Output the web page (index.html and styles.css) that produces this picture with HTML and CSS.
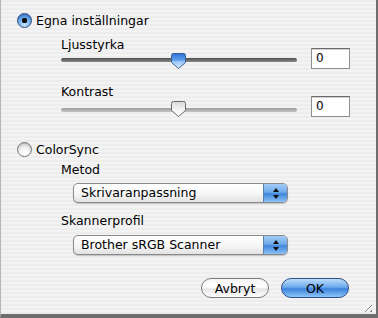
FILE: index.html
```html
<!DOCTYPE html>
<html lang="sv">
<head>
  <meta charset="UTF-8" />
  <title>Bildinställningar</title>
  <link rel="stylesheet" href="styles.css">
</head>
<body>

<div class="dialog">

  <!-- egna inställningar -->
  <label class="radio-row first">
    <span class="radio checked"></span>
    <span>Egna inställningar</span>
  </label>

  <div class="group">
    <div class="label brightness">Ljusstyrka</div>
    <div class="slider-row">
      <div class="slider dark">
        <div class="track"></div>
        <svg class="thumb" width="17" height="18" viewBox="0 0 17 18">
          <defs>
            <linearGradient id="blue" x1="0" y1="0" x2="0" y2="1">
              <stop offset="0" stop-color="#2f6fd6"/>
              <stop offset="0.45" stop-color="#5fa0ec"/>
              <stop offset="0.55" stop-color="#9cc8f5"/>
              <stop offset="1" stop-color="#d9ecfd"/>
            </linearGradient>
          </defs>
          <path d="M1.5 3.5 Q1.5 1.5 3.5 1.5 L13.5 1.5 Q15.5 1.5 15.5 3.5 L15.5 10.5 L8.5 16.5 L1.5 10.5 Z" fill="url(#blue)" stroke="#3a5f95" stroke-width="1"/>
        </svg>
      </div>
      <div class="field">0</div>
    </div>

    <div class="label contrast">Kontrast</div>
    <div class="slider-row second">
      <div class="slider light">
        <div class="track"></div>
        <svg class="thumb" width="17" height="18" viewBox="0 0 17 18">
          <defs>
            <linearGradient id="white" x1="0" y1="0" x2="0" y2="1">
              <stop offset="0" stop-color="#d8d8d8"/>
              <stop offset="0.5" stop-color="#f2f2f2"/>
              <stop offset="1" stop-color="#ffffff"/>
            </linearGradient>
          </defs>
          <path d="M1.5 3.5 Q1.5 1.5 3.5 1.5 L13.5 1.5 Q15.5 1.5 15.5 3.5 L15.5 10.5 L8.5 16.5 L1.5 10.5 Z" fill="url(#white)" stroke="#6a6a6a" stroke-width="1"/>
        </svg>
      </div>
      <div class="field">0</div>
    </div>
  </div>

  <!-- colorsync -->
  <label class="radio-row colorsync">
    <span class="radio"></span>
    <span>ColorSync</span>
  </label>

  <div class="group">
    <div class="label method">Metod</div>
    <div class="popup">
      <span class="popup-text">Skrivaranpassning</span>
      <span class="popup-arrows"><i class="up"></i><i class="down"></i></span>
    </div>

    <div class="label profile">Skannerprofil</div>
    <div class="popup last">
      <span class="popup-text">Brother sRGB Scanner</span>
      <span class="popup-arrows"><i class="up"></i><i class="down"></i></span>
    </div>
  </div>

  <div class="buttons">
    <button class="btn">Avbryt</button>
    <button class="btn default">OK</button>
  </div>

  <div class="grip"></div>
</div>

</body>
</html>
```

FILE: styles.css
```css
/* dialogruta */
body {
  margin: 0;
  padding: 0;
  font-family: "DejaVu Sans", sans-serif;
  font-size: 12.5px;
  color: #000;
}

.dialog {
  position: relative;
  display: flex;
  flex-direction: column;
  width: 375px;
  height: 314px;
  border-left: 1px solid #b4b4b4;
  border-right: 2px solid #6e6e6e;
  border-bottom: 4px solid #6e6e6e;
  background: repeating-linear-gradient(#ededed 0, #ededed 2px, #f3f3f3 2px, #f3f3f3 4px);
}

.radio-row {
  display: flex;
  align-items: center;
  gap: 4px;
  height: 16px;
  padding-left: 16px;
}

.radio-row.first {
  margin-top: 12px;
}

.radio-row.colorsync {
  margin-top: 23px;
}

.radio {
  width: 13px;
  height: 13px;
  border-radius: 50%;
  border: 1px solid #777;
  background: radial-gradient(circle at 50% 80%, #ffffff 0, #f4f4f4 40%, #c8c8c8 100%);
  box-shadow: inset 0 1px 1px rgba(0,0,0,0.15);
}

.radio.checked {
  border-color: #2b4f86;
  background:
    radial-gradient(circle, #111 0, #111 2.5px, transparent 3px),
    radial-gradient(circle at 50% 85%, #c6e2fb 0, #79b3ee 45%, #2d6cd2 100%);
}

.group {
  display: flex;
  flex-direction: column;
  padding-left: 60px;
}

.label {
  height: 12px;
  line-height: 12px;
}

.label.brightness { margin-top: 11px; }
.label.contrast { margin-top: 16px; }
.label.method { margin-top: 7px; }
.label.profile { margin-top: 12px; }

.slider-row {
  display: flex;
  align-items: flex-start;
  height: 22px;
  margin-top: -3px;
}

.slider-row.second {
  margin-top: -2px;
}

.slider {
  position: relative;
  width: 236px;
  height: 22px;
}

.track {
  position: absolute;
  left: 0;
  right: 0;
  top: 10px;
  height: 4px;
  border-radius: 2px;
}

.dark .track {
  background: linear-gradient(#4e4e4e, #8a8a8a);
}

.light .track {
  top: 12px;
  background: linear-gradient(#9c9c9c, #c4c4c4);
}

.thumb {
  position: absolute;
  left: 109px;
  top: 4px;
}

.field {
  margin-left: 14px;
  width: 33px;
  height: 19px;
  line-height: 19px;
  padding-left: 4px;
  background: #fff;
  border: 1px solid #8e8e8e;
  border-top-color: #6b6b6b;
  box-shadow: inset 0 1px 0 #cfcfcf;
  font-size: 12px;
}

.popup {
  display: flex;
  width: 213px;
  height: 18px;
  margin: 7px 0 0 12px;
  border: 1px solid #8a8a8a;
  border-radius: 5px;
  overflow: hidden;
  background: linear-gradient(#ffffff, #f6f6f6 55%, #e2e2e2);
  box-shadow: 0 1px 1px rgba(0,0,0,0.2);
}

.popup.last {
  margin-top: 8px;
}

.popup-text {
  flex: 1;
  line-height: 18px;
  padding-left: 7px;
}

.popup-arrows {
  width: 23px;
  border-left: 1px solid #5c7fb4;
  background: linear-gradient(#a3ccf5, #6faae9 45%, #3f86db 55%, #8fc3f5);
  display: flex;
  flex-direction: column;
  align-items: center;
  justify-content: center;
  gap: 3px;
}

.popup-arrows i {
  width: 0;
  height: 0;
  border-left: 3px solid transparent;
  border-right: 3px solid transparent;
}

.popup-arrows .up {
  border-bottom: 4px solid #111;
}

.popup-arrows .down {
  border-top: 4px solid #111;
}

.buttons {
  display: flex;
  justify-content: flex-end;
  gap: 12px;
  padding-right: 27px;
  margin-top: 23px;
}

.btn {
  font-family: "DejaVu Sans", sans-serif;
  font-size: 12.5px;
  width: 68px;
  height: 20px;
  padding: 0;
  border-radius: 10px;
  border: 1px solid #7a7a7a;
  background: linear-gradient(#f6f6f6, #ffffff 45%, #e4e4e4 55%, #ffffff);
  color: #000;
}

.btn.default {
  border-color: #2e4f8a;
  background: linear-gradient(#bcdcfa, #6eaaeb 45%, #3d82dc 55%, #8cc6f8);
}

/* storleksändring */
.grip {
  position: absolute;
  right: 4px;
  bottom: 2px;
  width: 11px;
  height: 11px;
  background: repeating-linear-gradient(135deg, transparent 0, transparent 2px, #8a8a8a 2px, #8a8a8a 3px, #fff 3px, #fff 4px);
  clip-path: polygon(100% 0, 100% 100%, 0 100%);
}
```
